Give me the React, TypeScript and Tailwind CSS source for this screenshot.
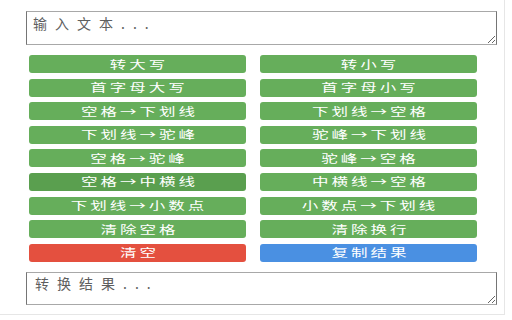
import React, { useState } from 'react';

type Btn = { label: string; tone?: 'green' | 'red' | 'blue'; hover?: boolean };

const rows: [Btn, Btn][] = [
  [{ label: '转大写' }, { label: '转小写' }],
  [{ label: '首字母大写' }, { label: '首字母小写' }],
  [{ label: '空格→下划线' }, { label: '下划线→空格' }],
  [{ label: '下划线→驼峰' }, { label: '驼峰→下划线' }],
  [{ label: '空格→驼峰' }, { label: '驼峰→空格' }],
  [{ label: '空格→中横线', hover: true }, { label: '中横线→空格' }],
  [{ label: '下划线→小数点' }, { label: '小数点→下划线' }],
  [{ label: '清除空格' }, { label: '清除换行' }],
  [{ label: '清空', tone: 'red' }, { label: '复制结果', tone: 'blue' }],
];

const ActionButton: React.FC<{ b: Btn }> = ({ b }) => {
  const color =
    b.tone === 'red'
      ? 'bg-[#e4503f]'
      : b.tone === 'blue'
      ? 'bg-[#4a90e2]'
      : b.hover
      ? 'bg-[#5a9f4f]'
      : 'bg-[#66ae5b]';
  return (
    <button
      className={`${color} h-[18px] rounded-[3px] text-white flex items-center justify-center overflow-hidden`}
    >
      <span className="inline-block text-[11px] leading-[13px] tracking-[2px] pl-[2px] scale-x-[1.5]">{b.label}</span>
    </button>
  );
};

export default function App() {
  const [input, setInput] = useState('');
  return (
    <div
      className="w-[505px] h-[315px] bg-white border-r border-b border-[#e6e6e6] overflow-hidden"
      style={{ fontFamily: '"Noto Sans CJK SC", "Noto Sans", sans-serif' }}
    >
      <div className="pt-[11px] pl-[26px]">
        <textarea
          value={input}
          onChange={e => setInput(e.target.value)}
          placeholder="输入文本..."
          className="block w-[471px] h-[34px] border border-[#a8a8a8] border-x-[#757575] px-[6px] py-[2px] text-[14px] leading-[18px] tracking-[8px] text-[#333] placeholder:text-[#5e5e5e] outline-none"
        />
      </div>

      <div className="ml-[29px] mt-[10px] w-[448px] grid grid-cols-2 gap-x-[14px] gap-y-[5.6px]">
        {rows.map(([l, r], i) => (
          <React.Fragment key={i}>
            <ActionButton b={l} />
            <ActionButton b={r} />
          </React.Fragment>
        ))}
      </div>

      <div className="pt-[10px] pl-[26px]">
        <textarea
          readOnly
          placeholder="转换结果..."
          className="block w-[471px] h-[33px] border border-[#a8a8a8] border-x-[#757575] pl-[8px] pr-[6px] py-[1px] text-[14px] leading-[18px] tracking-[8px] text-[#333] placeholder:text-[#5e5e5e] outline-none"
        />
      </div>
    </div>
  );
}
